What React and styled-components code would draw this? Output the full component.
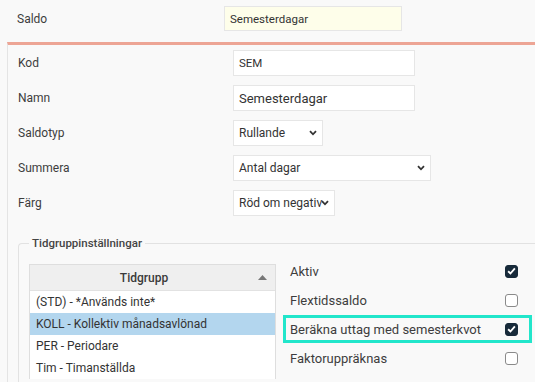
import React from "react";
import styled, { createGlobalStyle } from "styled-components";

const Global = createGlobalStyle`
  html, body {
    margin: 0;
    padding: 0;
    background: #f9f9f9;
  }
  body {
    font-family: Roboto, "Liberation Sans", sans-serif;
    font-size: 13px;
    color: #3d3d3d;
    overflow: hidden;
  }
`;

const Page = styled.div`
  width: 535px;
  height: 382px;
  overflow: hidden;
`;

const TopRow = styled.div`
  display: flex;
  align-items: center;
  height: 42px;
  padding-left: 17px;
  box-sizing: border-box;
  padding-bottom: 5px;
`;

const TopLabel = styled.div`
  width: 207px;
  font-size: 12px;
`;

const Panel = styled.div`
  margin-left: 7px;
  border-top: 3px solid #eda595;
  border-left: 1px solid #e4e4e4;
  padding: 5px 0 0 10px;
  height: 400px;
`;

const Row = styled.div`
  display: flex;
  align-items: center;
  height: 26px;
  margin-bottom: 9px;
`;

const Label = styled.div`
  width: 215px;
  font-size: 12px;
`;

const Field = styled.div`
  box-sizing: border-box;
  display: flex;
  align-items: center;
  justify-content: space-between;
  width: ${(p) => p.w}px;
  height: ${(p) => p.h || 26}px;
  padding: 0 5px 0 5px;
  background: ${(p) => (p.yellow ? "#fefeea" : "#fff")};
  border: 1px solid #e6e6e6;
  color: #333;
  font-size: ${(p) => p.fs || 12}px;
  white-space: nowrap;
  overflow: hidden;
`;

const FieldText = styled.span`
  flex: 1;
  min-width: 0;
`;

const Fieldset = styled.fieldset`
  margin: 20px 0 0 0;
  width: 540px;
  border: 1px solid #e2e2e2;
  border-right: none;
  border-radius: 4px 0 0 0;
  padding: 7px 0 0 10px;
  height: 160px;
`;

const Legend = styled.legend`
  padding: 0 3px;
  margin-left: 0;
  font-size: 11.5px;
  font-weight: 500;
  color: #444;
`;

const Columns = styled.div`
  display: flex;
  gap: 7px;
  align-items: flex-start;
`;

const Table = styled.div`
  width: 245px;
  margin-top: 7px;
  border: 1px solid #dedede;
  border-bottom: none;
  background: #fff;
  font-size: 12px;
`;

const Header = styled.div`
  display: flex;
  align-items: center;
  height: 25px;
  background: #efefef;
  border-bottom: 1px solid #e2e2e2;
  font-weight: 500;
  color: #3a3a3a;
  padding-right: 8px;
`;

const HeaderText = styled.span`
  flex: 1;
  text-align: center;
`;

const TRow = styled.div`
  height: 22px;
  line-height: 22px;
  padding-left: 6px;
  background: ${(p) => (p.selected ? "#b3d6ee" : "#fff")};
  color: #333;
  white-space: nowrap;
`;

const Options = styled.div`
  width: 249px;
`;

const OptionRow = styled.div`
  box-sizing: border-box;
  display: flex;
  align-items: center;
  justify-content: space-between;
  height: 28px;
  margin-bottom: 1px;
  padding: 0 11px 0 4px;
  border: 3px solid ${(p) => (p.highlight ? "#22e6cb" : "transparent")};
  color: #3d3d3d;
`;

const Box = styled.span`
  box-sizing: border-box;
  width: 13px;
  height: 13px;
  border-radius: 3px;
  display: flex;
  align-items: center;
  justify-content: center;
  background: ${(p) => (p.checked ? "#172a3a" : "#fff")};
  border: 1px solid ${(p) => (p.checked ? "#172a3a" : "#8a8a8a")};
`;

const ChevronSvg = styled.svg`
  flex-shrink: 0;
  margin-left: 1px;
`;

const Chevron = () => (
  <ChevronSvg width="8" height="6" viewBox="0 0 8 6">
    <path d="M1 1.2 L4 4.3 L7 1.2" fill="none" stroke="#333" strokeWidth="1.8" />
  </ChevronSvg>
);

const Check = () => (
  <svg width="9" height="8" viewBox="0 0 10 9">
    <path d="M1.2 4.8 L3.8 7.3 L8.8 1.5" fill="none" stroke="#fff" strokeWidth="2.1" />
  </svg>
);

const SortUp = () => (
  <svg width="9" height="5" viewBox="0 0 9 5">
    <path d="M0 5 L4.5 0 L9 5 Z" fill="#777" />
  </svg>
);

const Select = ({ w, children }) => (
  <Field w={w}>
    <FieldText>{children}</FieldText>
    <Chevron />
  </Field>
);

const groups = [
  "(STD) - *Används inte*",
  "KOLL - Kollektiv månadsavlönad",
  "PER - Periodare",
  "Tim - Timanställda",
];

const options = [
  { label: "Aktiv", checked: true },
  { label: "Flextidssaldo", checked: false },
  { label: "Beräkna uttag med semesterkvot", checked: true, highlight: true },
  { label: "Faktoruppräknas", checked: false },
];

export default function App() {
  return (
    <Page>
      <Global />
      <TopRow>
        <TopLabel>Saldo</TopLabel>
        <Field w={178} h={25} fs={11.5} yellow>
          <FieldText>Semesterdagar</FieldText>
        </Field>
      </TopRow>
      <Panel>
        <Row>
          <Label>Kod</Label>
          <Field w={182} fs={11.5}>
            <FieldText>SEM</FieldText>
          </Field>
        </Row>
        <Row>
          <Label>Namn</Label>
          <Field w={182} fs={13}>
            <FieldText>Semesterdagar</FieldText>
          </Field>
        </Row>
        <Row>
          <Label>Saldotyp</Label>
          <Select w={90}>Rullande</Select>
        </Row>
        <Row>
          <Label>Summera</Label>
          <Select w={198}>Antal dagar</Select>
        </Row>
        <Row>
          <Label>Färg</Label>
          <Select w={102}>Röd om negativ</Select>
        </Row>
        <Fieldset>
          <Legend>Tidgruppinställningar</Legend>
          <Columns>
            <Table>
              <Header>
                <HeaderText>Tidgrupp</HeaderText>
                <SortUp />
              </Header>
              {groups.map((g, i) => (
                <TRow key={g} selected={i === 1}>
                  {g}
                </TRow>
              ))}
            </Table>
            <Options>
              {options.map((o) => (
                <OptionRow key={o.label} highlight={o.highlight}>
                  <span>{o.label}</span>
                  <Box checked={o.checked}>{o.checked && <Check />}</Box>
                </OptionRow>
              ))}
            </Options>
          </Columns>
        </Fieldset>
      </Panel>
    </Page>
  );
}
